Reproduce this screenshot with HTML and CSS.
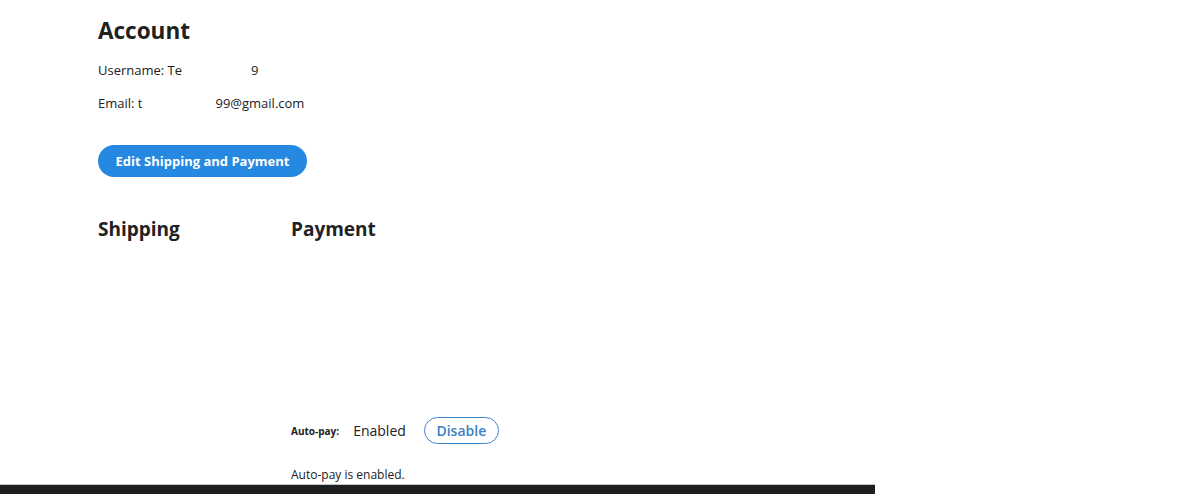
FILE: index.html
```html
<!DOCTYPE html>
<html lang="en">
<head>
  <meta charset="UTF-8" />
  <meta name="viewport" content="width=device-width, initial-scale=1.0"/>
  <title>Account</title>
  <link rel="stylesheet" href="styles.css">
</head>
<body>

  <div class="account">
    <h1>Account</h1>
    <p class="info">Username: Te<span class="hidden-gap"></span>9</p>
    <p class="info">Email: t<span class="hidden-gap wide"></span>99@gmail.com</p>

    <button class="edit-btn">Edit Shipping and Payment</button>

    <div class="columns">
      <div class="shipping">
        <h2>Shipping</h2>
        <div class="details"></div>
      </div>
      <div class="payment">
        <h2>Payment</h2>
        <div class="details"></div>
        <div class="autopay">
          <span class="autopay-label">Auto-pay:</span>
          <span class="autopay-state">Enabled</span>
          <button class="disable-btn">Disable</button>
        </div>
        <p class="autopay-note">Auto-pay is enabled.</p>
      </div>
    </div>
  </div>

  <div class="bottom-bar"></div>

</body>
</html>
```

FILE: styles.css
```css
body { font-family: "Open Sans", "Noto Sans", sans-serif; margin: 0; background: #fff; color: #212121; }
.account { padding: 17px 0 0 98px; height: 469px; box-sizing: border-box; }
.account h1 { margin: 0; font-size: 22.5px; line-height: 28px; font-weight: 700; }
.info { margin: 0; font-size: 13px; line-height: 20px; }
.account h1 + .info { margin-top: 15px; }
.info + .info { margin-top: 13px; }
.hidden-gap { display: inline-block; width: 69px; }
.hidden-gap.wide { width: 73px; }
.edit-btn { margin-top: 32px; height: 32px; width: 209px; border: none; border-radius: 16px; background: #2589e2; color: #fff; font-family: inherit; font-size: 13px; font-weight: 700; cursor: pointer; }
.columns { display: flex; margin-top: 38px; }
.columns h2 { margin: 0; font-size: 19px; line-height: 28px; font-weight: 700; }
.shipping { width: 193px; }
.details { height: 174px; }
.autopay { display: flex; align-items: center; height: 27px; }
.autopay-label { font-size: 10px; font-weight: 700; }
.autopay-state { font-size: 14px; margin-left: 14px; }
.disable-btn { margin-left: 18px; height: 27px; width: 75px; border: 1px solid #3b86cf; border-radius: 14px; background: #fff; color: #3b7fc4; font-family: inherit; font-size: 14px; font-weight: 600; cursor: pointer; }
.autopay-note { margin: 23px 0 0; font-size: 12px; line-height: 16px; }
.bottom-bar { margin-top: 15px; width: 875px; height: 9px; background: #1e1f21; border-top: 1px solid #c8c8c8; }
```
